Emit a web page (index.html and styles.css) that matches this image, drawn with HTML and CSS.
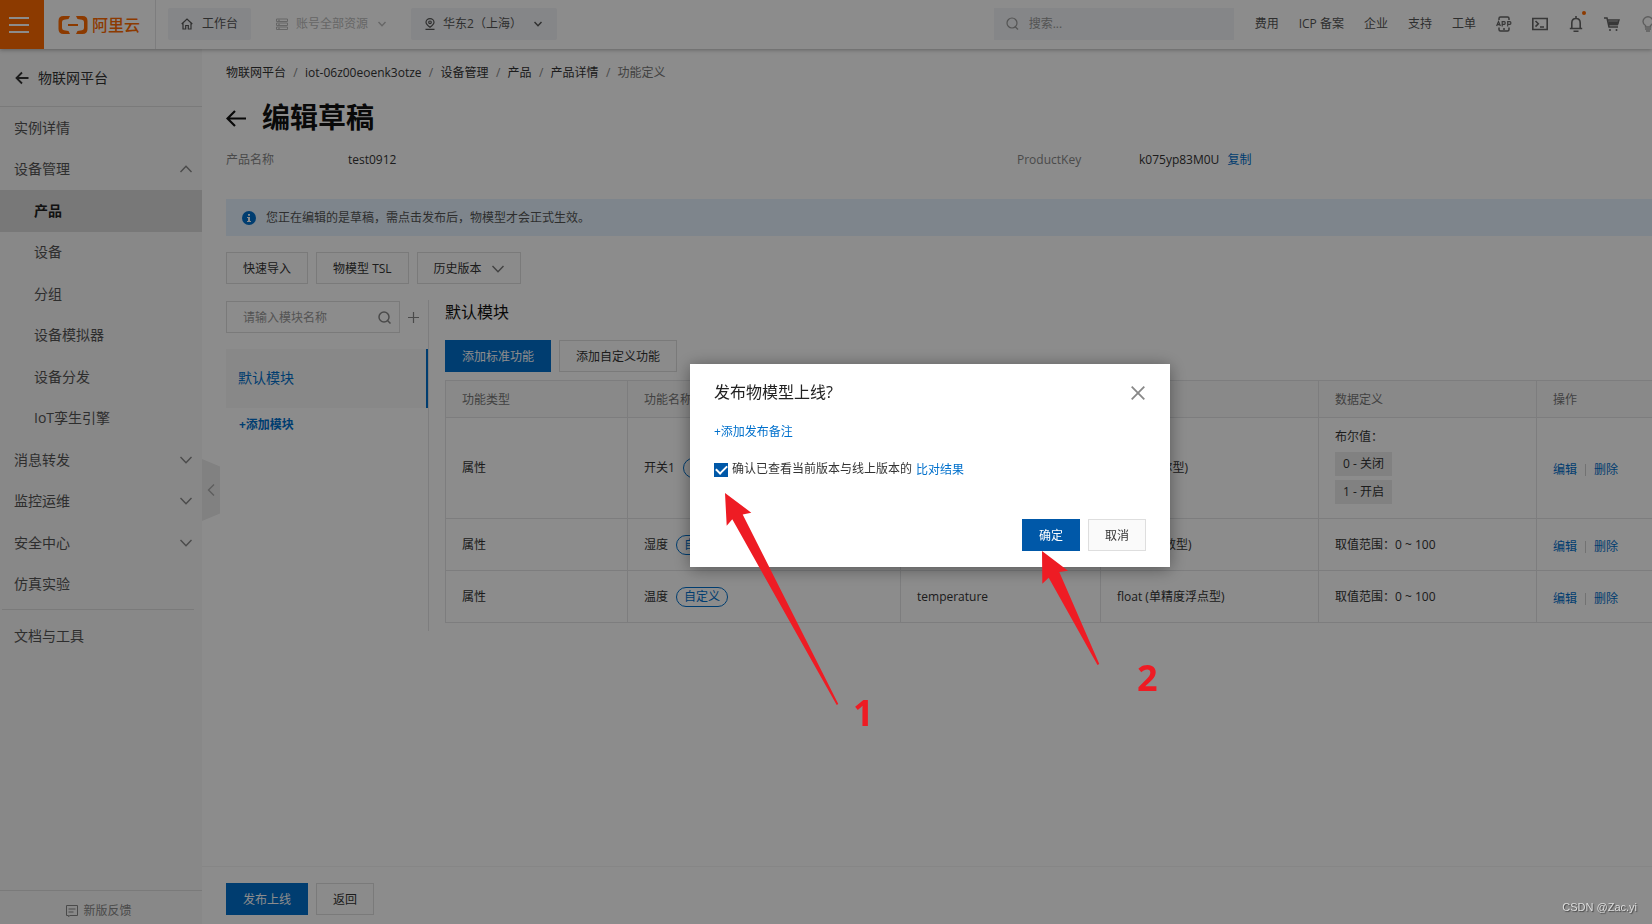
FILE: index.html
```html
<!DOCTYPE html>
<html lang="zh-CN">
<head>
<meta charset="utf-8">
<title>编辑草稿 - 物联网平台</title>
<link rel="stylesheet" href="styles.css">
</head>
<body>
<div class="app">
  <header class="topbar">
    <button class="menu-btn" aria-label="菜单"><span></span><span></span><span></span></button>
    <a class="logo" href="#">
      <svg width="30" height="20" viewBox="0 0 30 20" fill="currentColor"><path d="M12 1L10.500 4L6 4.800Q4 5.200 4 7V13Q4 14.800 6 15.200L10.500 16L12 19H5.500Q.5 19 .5 14V6Q.5 1 5.500 1ZM18 1L19.500 4L24 4.800Q26 5.200 26 7V13Q26 14.800 24 15.200L19.500 16L18 19H24.500Q29.500 19 29.500 14V6Q29.500 1 24.500 1ZM10 9H20V11H10Z"/></svg>
      <span>阿里云</span>
    </a>
    <div class="top-left">
      <button class="chip workbench">
        <svg width="12" height="12" viewBox="0 0 12 12" fill="none" stroke="currentColor" stroke-width="1.200"><path d="M.7 6L6 1L11.300 6M2 5V11H4.700V7.500H7.300V11H10V5"/></svg>
        工作台
      </button>
      <button class="chip resource">
        <svg width="12" height="12" viewBox="0 0 12 12" fill="none" stroke="currentColor"><path d="M.5 1H11.500V3.500H.5ZM.5 5H11.500V7.500H.5ZM.5 9H11.500V11.500H.5ZM2 2.200H4M2 6.200H4M2 10.200H4"/></svg>
        账号全部资源
        <svg class="caret" width="8" height="6" viewBox="0 0 8 6" fill="none" stroke="currentColor" stroke-width="1.400"><path d="M.5 1L4 4.800L7.500 1"/></svg>
      </button>
      <button class="chip region">
        <svg width="10" height="12" viewBox="0 0 10 12" fill="none" stroke="currentColor" stroke-width="1.200"><path d="M5 9.300C2.500 7.500 1 6 1 4.300A4 3.700 0 0 1 9 4.300C9 6 7.500 7.500 5 9.300ZM.5 11.400H9.500"/><circle cx="5" cy="4.300" r="1.300"/></svg>
        华东2（上海）
        <svg class="caret" width="8" height="6" viewBox="0 0 8 6" fill="none" stroke="currentColor" stroke-width="1.400"><path d="M.5 1L4 4.800L7.500 1"/></svg>
      </button>
    </div>
    <label class="search">
      <svg width="13" height="13" viewBox="0 0 13 13" fill="none" stroke="currentColor" stroke-width="1.200"><circle cx="6" cy="6" r="5"/><path d="M9 9.500L12 12.500"/></svg>
      <input type="text" placeholder="搜索..." aria-label="搜索">
    </label>
    <nav class="top-nav">
      <a href="#">费用</a><a href="#">ICP 备案</a><a href="#">企业</a><a href="#">支持</a><a href="#">工单</a>
      <button class="icon-btn" aria-label="App">
        <svg width="16" height="16" viewBox="0 0 16 16" fill="none" stroke="currentColor" stroke-width="1.500"><path d="M3 4V2.500Q3 1 4.500 1H11.500Q13 1 13 2.500V4M3 11.500V13.500Q3 15 4.500 15H11.500Q13 15 13 13.500V11.500M7 13H9"/><path stroke-width="1.200" d="M.6 10L2.500 5.500L4.400 10M1.200 8.700H3.800M6.200 10.500V5.700H8.300Q9.200 5.700 9.200 7T8.300 8.400H6.200M11.700 10.500V5.700H13.800Q14.900 5.700 14.900 7T13.800 8.400H11.700"/></svg>
      </button>
      <button class="icon-btn" aria-label="Cloud Shell">
        <svg width="16" height="16" viewBox="0 0 16 16" fill="none" stroke="currentColor" stroke-width="1.600"><path d="M.8 2.500H15.200V13.500H.8ZM3.500 5L6.300 7.800L3.500 10.600M8 11H12"/></svg>
      </button>
      <button class="icon-btn bell" aria-label="消息">
        <svg width="16" height="16" viewBox="0 0 16 16" fill="none" stroke="currentColor" stroke-width="1.600"><path d="M8 0V2M3.800 12V7Q3.800 2.500 8 2.500T12.200 7V12M1.800 12.500H14.200M5.500 15.200H10.500"/></svg>
        <i class="dot"></i>
      </button>
      <button class="icon-btn" aria-label="购物车">
        <svg width="16" height="16" viewBox="0 0 16 16" fill="none" stroke="currentColor" stroke-width="1.500"><path d="M0 2H3L5 11H14M4 4H15L13.500 8.500H5"/><path fill="currentColor" d="M5 6H14L13.300 8.500H5Z"/><circle cx="6" cy="14" r="1" fill="currentColor" stroke="none"/><circle cx="12.500" cy="14" r="1" fill="currentColor" stroke="none"/></svg>
      </button>
      <button class="icon-btn bulb" aria-label="帮助">
        <svg width="16" height="16" viewBox="0 0 16 16" fill="none" stroke="currentColor" stroke-width="1.400"><path d="M5.500 11V9.500Q3 8 3 5.500A5 4.700 0 0 1 13 5.500Q13 8 10.500 9.500V11ZM5 13H11M6 15H10"/></svg>
      </button>
    </nav>
  </header>

  <div class="body">
    <aside class="sidebar">
      <a class="side-title" href="#">
        <svg width="14" height="14" viewBox="0 0 14 14" fill="none" stroke="currentColor" stroke-width="1.800"><path d="M7 1.500L1.500 7L7 12.500M1.500 7H13.500"/></svg>
        物联网平台
      </a>
      <nav class="side-nav">
        <a href="#">实例详情</a>
        <a href="#">设备管理<svg width="12" height="8" viewBox="0 0 12 8" fill="none" stroke="currentColor" stroke-width="1.400"><path d="M.5 7L6 1.200L11.500 7"/></svg></a>
        <a class="sub active" href="#">产品</a>
        <a class="sub" href="#">设备</a>
        <a class="sub" href="#">分组</a>
        <a class="sub" href="#">设备模拟器</a>
        <a class="sub" href="#">设备分发</a>
        <a class="sub" href="#">IoT孪生引擎</a>
        <a href="#">消息转发<svg width="12" height="8" viewBox="0 0 12 8" fill="none" stroke="currentColor" stroke-width="1.400"><path d="M.5 1L6 6.800L11.500 1"/></svg></a>
        <a href="#">监控运维<svg width="12" height="8" viewBox="0 0 12 8" fill="none" stroke="currentColor" stroke-width="1.400"><path d="M.5 1L6 6.800L11.500 1"/></svg></a>
        <a href="#">安全中心<svg width="12" height="8" viewBox="0 0 12 8" fill="none" stroke="currentColor" stroke-width="1.400"><path d="M.5 1L6 6.800L11.500 1"/></svg></a>
        <a href="#">仿真实验</a>
      </nav>
      <hr>
      <a class="docs" href="#">文档与工具</a>
      <a class="feedback" href="#">
        <svg width="12" height="12" viewBox="0 0 12 12" fill="none" stroke="currentColor"><path d="M.5 .5H11.500V10.500H4L2.500 11.500V10.500H.5ZM2.500 4H9.500M2.500 7H7.500"/></svg>
        新版反馈
      </a>
      <button class="collapse" aria-label="收起"><svg width="8" height="12" viewBox="0 0 8 12" fill="none" stroke="currentColor" stroke-width="1.400"><path d="M7 .5L1.500 6L7 11.500"/></svg></button>
    </aside>

    <main class="main">
      <div class="content">
        <nav class="crumbs">
          <a href="#">物联网平台</a><i>/</i><a href="#">iot-06z00eoenk3otze</a><i>/</i><a href="#">设备管理</a><i>/</i><a href="#">产品</a><i>/</i><a href="#">产品详情</a><i>/</i><span>功能定义</span>
        </nav>
        <h1 class="title">
          <svg width="20" height="20" viewBox="0 0 20 20" fill="none" stroke="currentColor" stroke-width="2.200"><path d="M9 4L1.500 11.500L9 19M1.500 11.500H20"/></svg>
          编辑草稿
        </h1>
        <dl class="info">
          <div><dt>产品名称</dt><dd>test0912</dd></div>
          <div><dt>ProductKey</dt><dd>k075yp83M0U<a href="#">复制</a></dd></div>
        </dl>
        <div class="notice">
          <svg width="14" height="14" viewBox="0 0 14 14"><circle cx="7" cy="7" r="7" fill="#0070cc"/><path d="M6 3H8V4.800H6ZM5 6H8V10H9V11H5V10H6V7H5Z" fill="#fff"/></svg>
          您正在编辑的是草稿，需点击发布后，物模型才会正式生效。
        </div>
        <div class="row">
          <button class="btn">快速导入</button>
          <button class="btn">物模型 TSL</button>
          <button class="btn">历史版本<svg width="12" height="8" viewBox="0 0 12 8" fill="none" stroke="#777" stroke-width="1.400"><path d="M.5 1L6 6.800L11.500 1"/></svg></button>
        </div>
        <div class="panes">
          <section class="modules">
            <div class="module-search">
              <label class="field">
                <input type="text" placeholder="请输入模块名称" aria-label="模块名称">
                <svg width="13" height="13" viewBox="0 0 13 13" fill="none" stroke="currentColor" stroke-width="1.500"><circle cx="6" cy="6" r="5"/><path d="M9.500 9.500L12.500 12.500"/></svg>
              </label>
              <button class="plus" aria-label="添加"><svg width="11" height="11" viewBox="0 0 11 11" stroke="currentColor" stroke-width="1.200"><path d="M5.500 0V11M0 5.500H11"/></svg></button>
            </div>
            <a class="module" href="#">默认模块</a>
            <a class="add-module" href="#">+添加模块</a>
          </section>
          <section class="features">
            <h2>默认模块</h2>
            <div class="row feature-actions">
              <button class="btn primary">添加标准功能</button>
              <button class="btn">添加自定义功能</button>
            </div>
            <table class="table">
              <colgroup><col class="c1"><col class="c2"><col class="c3"><col class="c4"><col class="c5"><col></colgroup>
              <thead><tr><th>功能类型</th><th>功能名称</th><th></th><th></th><th>数据定义</th><th>操作</th></tr></thead>
              <tbody>
                <tr class="tall"><td>属性</td><td>开关1<span class="pill">自定义</span></td><td></td><td>bool (布尔型)</td><td><div class="defs"><p>布尔值：</p><span class="tag">0 - 关闭</span><span class="tag">1 - 开启</span></div></td><td><div class="ops"><a href="#">编辑</a><a href="#">删除</a></div></td></tr>
                <tr><td>属性</td><td>湿度<span class="pill">自定义</span></td><td></td><td>int32 (整数型)</td><td>取值范围：0 ~ 100</td><td><div class="ops"><a href="#">编辑</a><a href="#">删除</a></div></td></tr>
                <tr><td>属性</td><td>温度<span class="pill">自定义</span></td><td>temperature</td><td>float (单精度浮点型)</td><td>取值范围：0 ~ 100</td><td><div class="ops"><a href="#">编辑</a><a href="#">删除</a></div></td></tr>
              </tbody>
            </table>
          </section>
        </div>
      </div>
      <footer class="row footer">
        <button class="btn primary">发布上线</button>
        <button class="btn">返回</button>
      </footer>
    </main>
  </div>
</div>

<div class="mask"></div>
<div class="dialog" role="dialog" aria-labelledby="dlg-title">
  <div class="dialog-head">
    <h2 id="dlg-title">发布物模型上线?</h2>
    <button class="close" aria-label="关闭"><svg width="14" height="14" viewBox="0 0 14 14" stroke="currentColor" stroke-width="1.800"><path d="M.7 .7L13.300 13.300M13.300 .7L.7 13.300"/></svg></button>
  </div>
  <a class="note" href="#">+添加发布备注</a>
  <div class="confirm">
    <input type="checkbox" id="checked" checked>
    <label for="checked">确认已查看当前版本与线上版本的</label>
    <a href="#">比对结果</a>
  </div>
  <div class="row dialog-foot">
    <button class="btn primary ok">确定</button>
    <button class="btn">取消</button>
  </div>
</div>

<svg class="arrows" width="420" height="240" viewBox="720 480 420 240" fill="#ee1c24"><path d="M725 493L751.300 512.700L742.700 514.500L838.300 704L836.700 705L732.300 519.300L726.700 525.700Z"/><path d="M1042 551L1068 570.700L1059.300 572L1099.300 664L1097.500 665L1048.700 577.700L1042.300 583.700Z"/></svg>
<span class="step one">1</span>
<span class="step two">2</span>
<span class="watermark">CSDN @Zac.yi</span>
</body>
</html>
```

FILE: styles.css
```css
* { box-sizing: border-box; margin: 0; padding: 0; }
html, body { height: 100%; overflow: hidden; }
body {
  font: 12px/18px "Open Sans", "Noto Sans CJK SC", sans-serif;
  color: #333;
  background: #fff;
}
a { color: inherit; text-decoration: none; }
button, input { font: inherit; color: inherit; border: 0; background: none; outline: 0; }
svg { flex: none; display: block; }
i { font-style: normal; }

.app { height: 100vh; display: flex; flex-direction: column; }

/* top bar */
.topbar {
  height: 49px; flex: none; display: flex; align-items: center;
  background: #fff; box-shadow: 0 1px 4px rgba(0,0,0,.3);
  position: relative; z-index: 2; overflow: hidden; white-space: nowrap;
}
.menu-btn {
  width: 44px; height: 49px; flex: none; padding-right: 6px; background: #ff6a00;
  display: flex; flex-direction: column; align-items: center; justify-content: center; gap: 5px;
}
.menu-btn span { width: 20px; height: 2px; background: #fff; }
.logo {
  width: 112px; height: 49px; flex: none; padding-left: 14px;
  border-right: 1px solid #e3e4e6; color: #ff6a00;
  display: flex; align-items: center; gap: 4px; font-size: 16px; font-weight: 500;
}
.top-left { display: flex; padding-left: 12px; margin-bottom: 2px; }
.chip { height: 32px; display: flex; align-items: center; gap: 8px; color: #555; border-radius: 2px; }
.workbench, .region { background: #f2f4f7; }
.workbench { padding: 0 13px; gap: 9px; }
.resource { padding: 0 25px; color: #bbb; }
.resource .caret { margin-left: 2px; }
.region { padding: 0 15px 0 14px; }
.caret { margin-left: 4px; }
.search {
  width: 240px; height: 32px; flex: none; margin: 0 21px 2px auto; padding: 0 12px;
  display: flex; align-items: center; gap: 10px; background: #f2f4f7; color: #999;
}
.search input { width: 180px; }
::placeholder { color: #999; opacity: 1; }
.top-nav { display: flex; align-items: center; gap: 20px; margin: 0 -4px 2px 0; color: #555; }
.icon-btn { width: 16px; height: 16px; position: relative; color: #666; }
.bulb { color: #aaa; }
.dot { position: absolute; right: -2px; top: -5px; width: 4px; height: 4px; border-radius: 50%; background: #ff6a00; }

/* side bar */
.body { flex: 1; min-height: 0; display: flex; }
.sidebar {
  width: 202px; flex: none; position: relative; background: #f7f7f7;
  display: flex; flex-direction: column; font-size: 14px; line-height: 20px;
}
.side-title {
  height: 58px; display: flex; align-items: center; gap: 9px;
  padding-left: 15px; border-bottom: 1px solid #dedede;
}
.side-nav { height: 498px; display: grid; grid-auto-rows: 1fr; color: #555; }
.side-nav a { display: flex; align-items: center; justify-content: space-between; padding: 0 10px 0 14px; }
.side-nav svg { color: #888; }
.side-nav .sub { padding-left: 34px; }
.side-nav .active { background: #dadada; color: #222; font-weight: 700; }
.sidebar hr { border: 0; border-top: 1px solid #dedede; margin: 4px 8px 0 2px; }
.docs { padding: 16px 14px; color: #555; }
.feedback {
  margin-top: auto; height: 34px; padding: 6px 4px 0 0; border-top: 1px solid #dedede; color: #888;
  display: flex; align-items: center; justify-content: center; gap: 5px; font-size: 12px;
}
.collapse {
  position: absolute; left: 202px; top: 410px; width: 18px; height: 62px;
  background: #ebebeb; color: #aaa; clip-path: polygon(0 0, 100% 12%, 100% 88%, 0 100%);
  display: flex; align-items: center; justify-content: center;
}

/* main area */
.main { flex: 1; min-width: 0; display: flex; flex-direction: column; }
.content { flex: 1; min-height: 0; padding: 15px 0 0 24px; }
.crumbs { display: flex; color: #333; }
.crumbs i { width: 19px; text-align: center; color: #888; }
.crumbs span { color: #777; }
.title { display: flex; align-items: center; gap: 16px; margin-top: 15px; font-size: 28px; line-height: 40px; color: #111; }
.info { display: grid; grid-template-columns: 791px 1fr; margin-top: 14px; }
.info div { display: flex; }
.info dt { width: 122px; color: #888; }
.info dd a { margin-left: 8px; }
.info a, .ops a, .note, .confirm a, .module, .add-module { color: #0070cc; }
.notice {
  margin-top: 30px; height: 37px; padding: 1px 16px 0; background: #e5f3ff; color: #555;
  display: flex; align-items: center; gap: 10px;
}
.row { display: flex; gap: 8px; }
.notice + .row { margin-top: 16px; }
.btn {
  height: 32px; padding: 2px 16px 0; border: 1px solid #dedede; background: #fdfdfd; color: #333;
  display: flex; align-items: center; gap: 10px; white-space: nowrap;
}
.primary { background: #0070cc; border-color: #0070cc; color: #fff; }
.panes { display: flex; margin-top: 16px; }
.modules { width: 203px; height: 331px; flex: none; border-right: 1px solid #e3e4e6; padding-top: 1px; }
.module-search { display: flex; align-items: center; gap: 8px; }
.field { width: 174px; height: 32px; border: 1px solid #dedede; padding: 1px 8px 0 16px; display: flex; align-items: center; justify-content: space-between; color: #888; }
.field input { width: 120px; }
.plus { color: #888; }
.module {
  height: 59px; margin-top: 16px; padding: 0 12px 2px; display: flex; align-items: center;
  background: #f7f7f7; border-right: 2px solid #0070cc; font-size: 14px;
}
.add-module { display: block; padding: 8px 13px; font-weight: 700; }
.features { flex: 1; min-width: 0; padding-left: 16px; }
.features h2 { font-size: 16px; line-height: 24px; font-weight: 400; color: #111; }
.feature-actions { margin: 16px 0 8px; }
.table { width: 100%; border-collapse: collapse; table-layout: fixed; }
.c1 { width: 182px; } .c2 { width: 273px; } .c3 { width: 200px; } .c4 { width: 218px; } .c5 { width: 218px; }
.table th, .table td { height: 52px; padding: 0 16px; border: 1px solid #e3e4e6; text-align: left; white-space: nowrap; }
.table th:last-child, .table td:last-child { border-right: 0; }
.table th { height: 37px; padding-top: 2px; font-weight: 400; background: #fafafa; color: #777; }
.table .tall td { height: 101px; }
.pill { display: inline-block; margin-left: 8px; height: 20px; line-height: 18px; padding: 0 7px; border: 1px solid #0070cc; border-radius: 10px; color: #0070cc; }
.defs { display: flex; flex-direction: column; align-items: flex-start; gap: 4px; padding-bottom: 4px; }
.defs p { margin-bottom: 2px; }
.tag { height: 24px; line-height: 24px; padding: 0 8px; background: #ebebeb; }
.ops { display: flex; align-items: center; padding-top: 4px; }
.ops a + a { margin-left: 8px; padding-left: 8px; line-height: 12px; border-left: 1px solid #d0d0d0; }
.footer { height: 58px; flex: none; padding: 16px 24px 9px; border-top: 1px solid #f4f4f4; }

/* confirm dialog */
.mask { position: fixed; inset: 0; z-index: 10; background: rgba(0,0,0,.45); }
.dialog {
  position: fixed; z-index: 11; left: 690px; top: 364px; width: 480px;
  padding: 16px 24px; background: #fff; box-shadow: 0 2px 16px rgba(0,0,0,.4);
}
.dialog-head { display: flex; justify-content: space-between; align-items: center; }
.dialog-head h2 { font-size: 16px; line-height: 24px; font-weight: 400; color: #222; }
.close { color: #888; padding: 2px 1px 0 0; }
.note { display: block; margin-top: 19px; }
.confirm { display: flex; align-items: center; gap: 4px; margin-top: 18px; }
.confirm a { padding-top: 2px; }
.confirm input {
  appearance: none; width: 14px; height: 14px; margin-top: 2px; background: #0058a8;
  display: flex; align-items: center; justify-content: center;
}
.confirm input::before { content: ""; width: 9px; height: 5px; margin-bottom: 3px; border: solid #fff; border-width: 0 0 2px 2px; transform: rotate(-45deg); }
.dialog-foot { justify-content: flex-end; margin-top: 40px; }
.dialog-foot .btn { background: #fafafa; }
.dialog-foot .ok { background: #0058a8; border-color: #0058a8; }

/* annotations */
.arrows { position: fixed; z-index: 12; left: 720px; top: 480px; }
.step { position: fixed; z-index: 12; font-size: 36px; line-height: 40px; font-weight: 700; color: #ee1c24; }
.one { left: 853px; top: 693px; }
.two { left: 1137px; top: 658px; }
.watermark { position: fixed; z-index: 12; right: 15px; bottom: 8px; font-family: "Liberation Sans", sans-serif; font-size: 11px; color: #ddd; text-shadow: 1px 1px 1px #444; }
```
